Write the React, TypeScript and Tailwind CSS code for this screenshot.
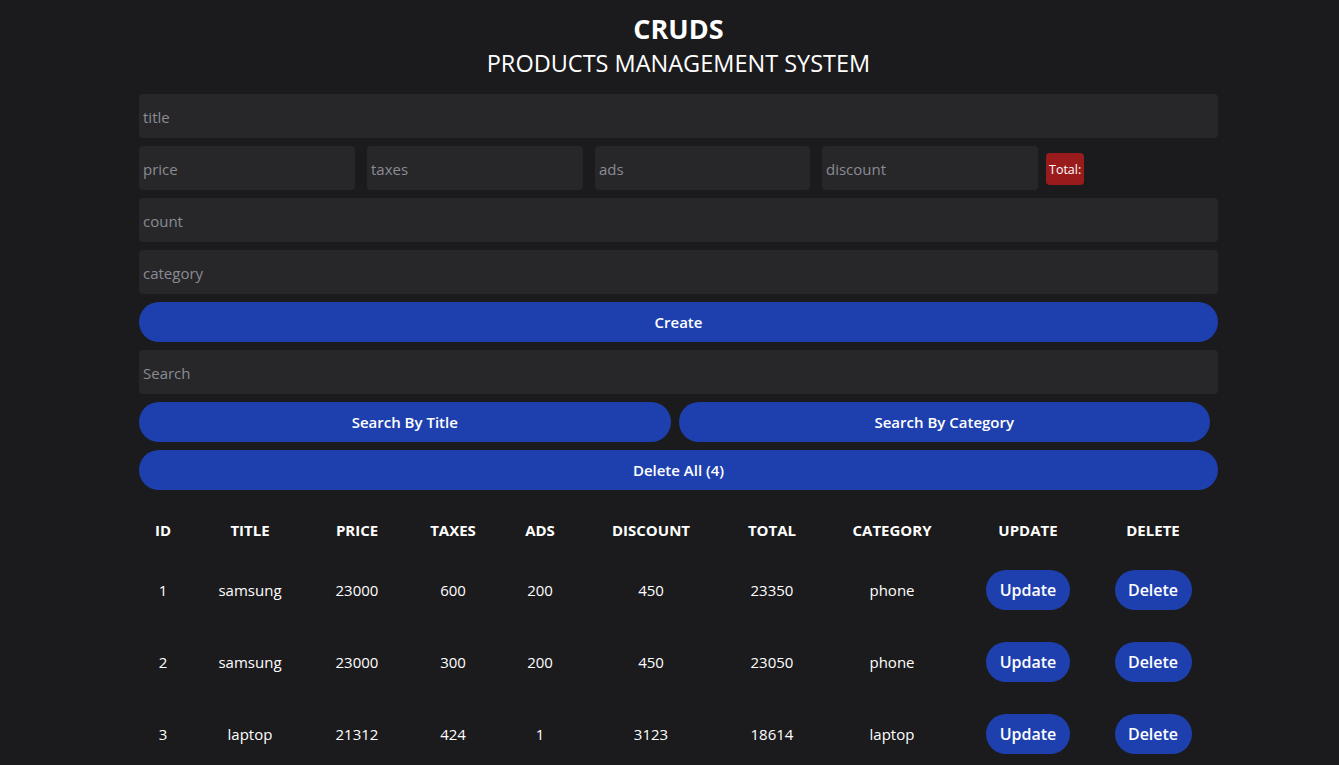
const rows = [
  { id: 1, title: "samsung", price: 23000, taxes: 600, ads: 200, discount: 450, total: 23350, category: "phone" },
  { id: 2, title: "samsung", price: 23000, taxes: 300, ads: 200, discount: 450, total: 23050, category: "phone" },
  { id: 3, title: "laptop", price: 21312, taxes: 424, ads: 1, discount: 3123, total: 18614, category: "laptop" },
];

const cols = [
  { label: "ID", w: "w-[48px]" },
  { label: "TITLE", w: "w-[126px]" },
  { label: "PRICE", w: "w-[88px]" },
  { label: "TAXES", w: "w-[104px]" },
  { label: "ADS", w: "w-[70px]" },
  { label: "DISCOUNT", w: "w-[152px]" },
  { label: "TOTAL", w: "w-[90px]" },
  { label: "CATEGORY", w: "w-[150px]" },
  { label: "UPDATE", w: "w-[122px]" },
  { label: "DELETE", w: "w-[128px]" },
];

const inputCls =
  "h-[44px] rounded-[4px] bg-[#27272a] px-[4px] pt-[2px] text-[15px] text-[#d4d4d8] placeholder:text-[#8b8b93] outline-none";

const btnCls =
  "h-[40px] rounded-full bg-[#1e40af] text-[15px] font-semibold text-white";

export default function App() {
  return (
    <div
      className="min-h-[765px] bg-[#1b1b1d] text-white"
      style={{ fontFamily: '"Open Sans", "Noto Sans", sans-serif' }}
    >
      <div className="ml-[139px] w-[1079px] pt-[10px]">
        <div className="text-center">
          <h1 className="text-[27px] font-bold leading-[38px]">CRUDS</h1>
          <h2 className="text-[23.5px] leading-[30px]">PRODUCTS MANAGEMENT SYSTEM</h2>
        </div>

        <div className="mt-[16px] flex flex-col gap-[8px]">
          <input className={inputCls + " w-full"} placeholder="title" />
          <div className="flex items-center">
            <input className={inputCls + " w-[216px]"} placeholder="price" />
            <input className={inputCls + " ml-[12px] w-[216px]"} placeholder="taxes" />
            <input className={inputCls + " ml-[12px] w-[215px]"} placeholder="ads" />
            <input className={inputCls + " ml-[12px] w-[216px]"} placeholder="discount" />
            <span className="ml-[8px] mt-[2px] flex h-[32px] items-center rounded-[4px] bg-[#991b1b] px-[3px] pt-[2px] text-[12.5px]">
              Total:
            </span>
          </div>
          <input className={inputCls + " w-full"} placeholder="count" />
          <input className={inputCls + " w-full"} placeholder="category" />
          <button className={btnCls + " w-full"}>Create</button>
          <input className={inputCls + " w-full"} placeholder="Search" />
          <div className="flex gap-[8px] pr-[8px]">
            <button className={btnCls + " flex-1"}>Search By Title</button>
            <button className={btnCls + " flex-1"}>Search By Category</button>
          </div>
          <button className={btnCls + " w-full"}>Delete All (4)</button>
        </div>

        <table className="mt-[16px] w-[1078px] table-fixed border-collapse text-center">
          <thead>
            <tr className="h-[48px]">
              {cols.map((c) => (
                <th key={c.label} className={c.w + " text-[15px] font-bold"}>
                  {c.label}
                </th>
              ))}
            </tr>
          </thead>
          <tbody className="text-[15px]">
            {rows.map((r) => (
              <tr key={r.id} className="h-[72px]">
                <td>{r.id}</td>
                <td>{r.title}</td>
                <td>{r.price}</td>
                <td>{r.taxes}</td>
                <td>{r.ads}</td>
                <td>{r.discount}</td>
                <td>{r.total}</td>
                <td>{r.category}</td>
                <td>
                  <button className="h-[40px] w-[84px] rounded-full bg-[#1e40af] text-[16px] font-semibold">
                    Update
                  </button>
                </td>
                <td>
                  <button className="h-[40px] w-[77px] rounded-full bg-[#1e40af] text-[16px] font-semibold">
                    Delete
                  </button>
                </td>
              </tr>
            ))}
          </tbody>
        </table>
      </div>
    </div>
  );
}
